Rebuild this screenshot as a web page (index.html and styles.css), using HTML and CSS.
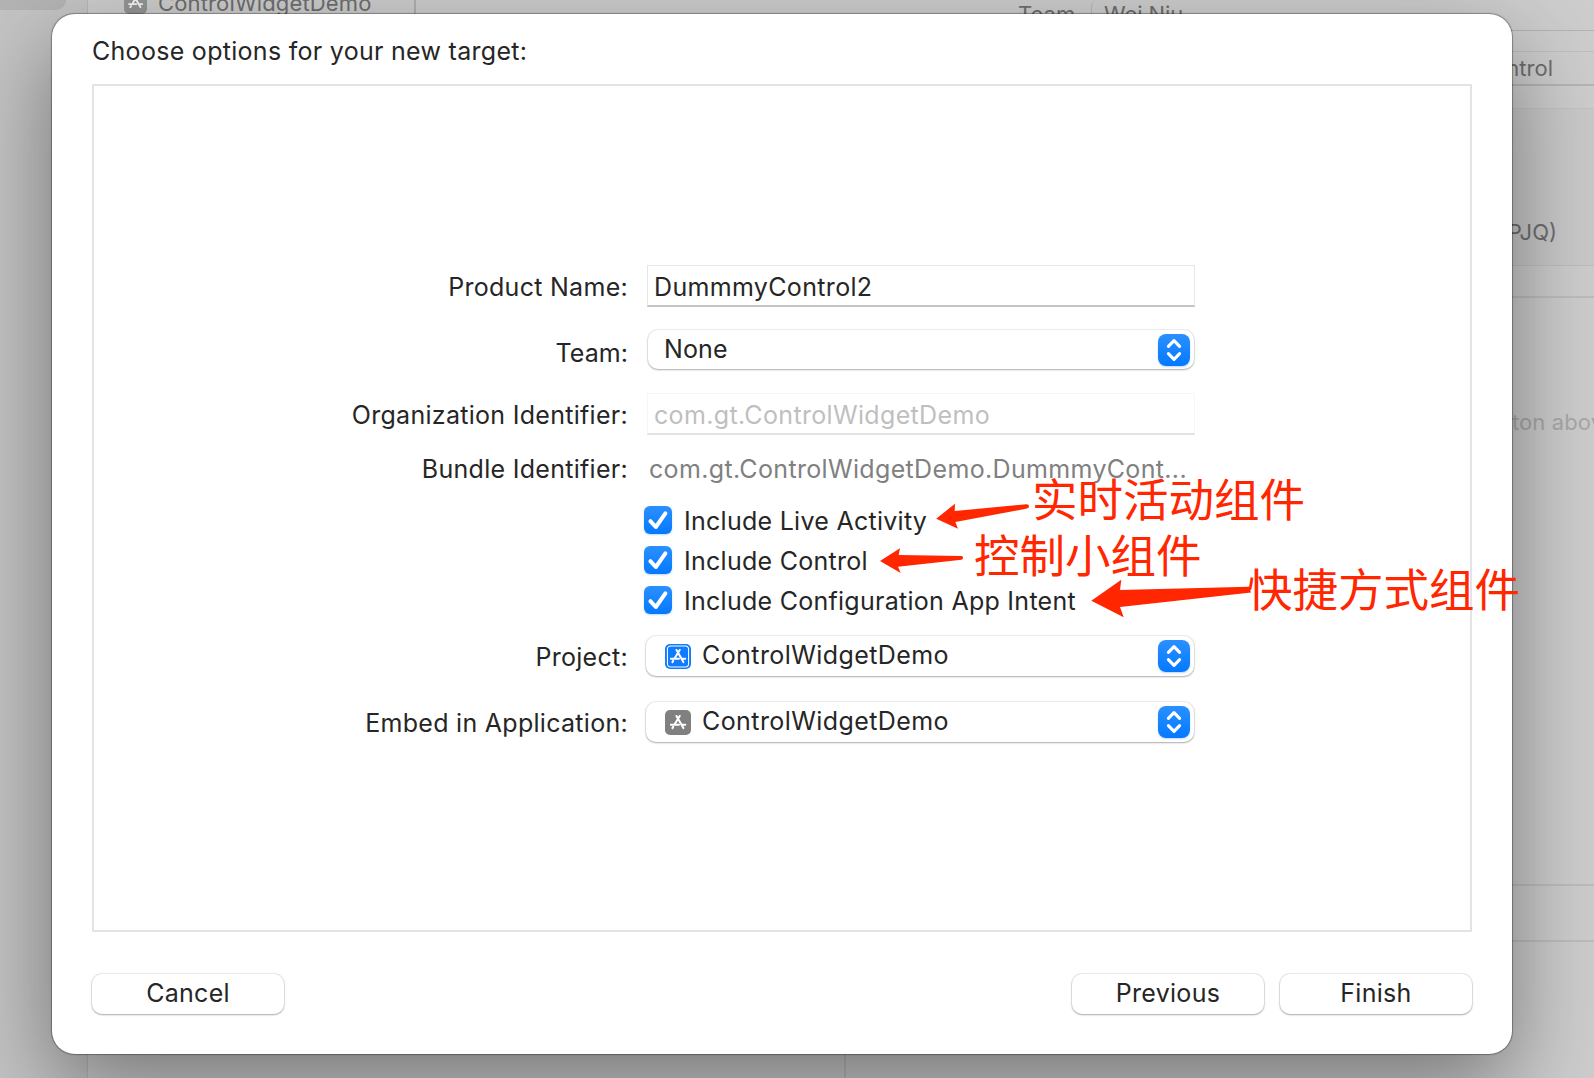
FILE: index.html
```html
<!DOCTYPE html>
<html lang="en">
<head>
<meta charset="utf-8">
<title>New Target</title>
<link rel="stylesheet" href="styles.css">
</head>
<body>
<svg class="defs" width="0" height="0">
  <symbol id="tick" viewBox="0 0 28 28"><path d="M6.4 15.2 11.8 21 21.4 7.4" fill="none" stroke="#fff" stroke-width="4" stroke-linecap="round" stroke-linejoin="round"/></symbol>
  <symbol id="updown" viewBox="0 0 32 32"><path d="M10.4 12.4 16 6.6 21.6 12.4M10.4 19.6 16 25.4 21.6 19.6" fill="none" stroke="#fff" stroke-width="3.1" stroke-linecap="round" stroke-linejoin="round"/></symbol>
  <symbol id="app" viewBox="0 0 26 26"><path d="M11.4 6.2 18.6 18.8M14.8 6.2 9.2 15.4M5.6 15.4H14M17.6 15.4H20.6M7.2 18.8 8 17.6" fill="none" stroke="#fff" stroke-width="2.1" stroke-linecap="round"/></symbol>
</svg>
<div class="screen">
  <div class="editor">
    <aside class="navigator"><div class="selection"></div></aside>
    <section class="targets">
      <svg class="app-icon faded"><use href="#app"/></svg><span class="target-name">ControlWidgetDemo</span>
    </section>
    <main class="settings">
      <div class="team-line"><span class="team-key">Team</span><span class="team-value">Wei Niu</span></div>
      <div class="gap-line"></div>
      <div class="row-name"><span>ntrol</span></div>
      <div class="gap-band"></div>
      <div class="row-cert"><span>PJQ)</span></div>
      <div class="foot-line"></div>
      <div class="empty"><span>ton above</span></div>
      <div class="section-line"></div>
      <div class="bottom"><div class="split"></div></div>
    </main>
  </div>

  <div class="dialog">
    <h1 class="title">Choose options for your new target:</h1>
    <div class="panel">
      <div class="row product"><label class="label l-product">Product Name:</label><div class="field"><span>DummmyControl2</span></div></div>
      <div class="row team"><label class="label l-team">Team:</label><div class="select narrow"><span class="value t-none">None</span><svg class="stepper"><use href="#updown"/></svg></div></div>
      <div class="row org"><label class="label l-org">Organization Identifier:</label><div class="field disabled"><span>com.gt.ControlWidgetDemo</span></div></div>
      <div class="row bundle"><label class="label">Bundle Identifier:</label><span class="bundle-value">com.gt.ControlWidgetDemo.DummmyCont...</span></div>
      <div class="checks">
        <div class="check"><svg class="box"><use href="#tick"/></svg><span class="t-check">Include Live Activity</span></div>
        <div class="check"><svg class="box"><use href="#tick"/></svg><span class="t-check">Include Control</span></div>
        <div class="check"><svg class="box"><use href="#tick"/></svg><span class="t-check">Include Configuration App Intent</span></div>
      </div>
      <div class="row project"><label class="label l-project">Project:</label><div class="select"><svg class="app-icon blue" viewBox="0 0 26 26"><rect x="2" y="2" width="22" height="22" rx="3.4" fill="none" stroke="#fff" stroke-width="1.1"/><use href="#app"/></svg><span class="value">ControlWidgetDemo</span><svg class="stepper"><use href="#updown"/></svg></div></div>
      <div class="row embed"><label class="label l-embed">Embed in Application:</label><div class="select"><svg class="app-icon"><use href="#app"/></svg><span class="value">ControlWidgetDemo</span><svg class="stepper"><use href="#updown"/></svg></div></div>
    </div>
    <div class="buttons">
      <button class="button">Cancel</button><span class="spring"></span><button class="button">Previous</button><button class="button">Finish</button>
    </div>
  </div>

  <svg class="arrows" viewBox="0 0 1594 1078">
    <path d="M936.2 518.7 955 503.7 954.7 511 1026.5 504.3Q1029 504.3 1029 506.2T1027 508.6L955.3 522 958 528.7Z"/>
    <path d="M880 561 900 548.3 898.7 555 961.5 556Q963 556 963 557.7T961.5 559.8L898 566.7 900.7 573Z"/>
    <path d="M1091.3 600.7 1121.3 579.7 1120 590 1249 586.8 1251 592.6 1120 607 1123.7 617.3Z"/>
  </svg>
  <span class="note n1">实时活动组件</span>
  <span class="note n2">控制小组件</span>
  <span class="note n3">快捷方式组件</span>
</div>
</body>
</html>
```
FILE: styles.css
```css
* { box-sizing: border-box; }
body { margin: 0; font-family: Inter, "Liberation Sans", sans-serif; font-size: 25px; font-weight: 440; line-height: 30px; letter-spacing: .29px; color: #262626; }
span, label, h1 { white-space: nowrap; }
.defs { position: absolute; }
.screen { display: flow-root; position: relative; width: 1594px; height: 1078px; overflow: hidden; background: #cdcdcd; }

/* dimmed editor window behind the sheet */
.editor { position: absolute; inset: 0; display: flex; font-size: 22px; line-height: 26px; letter-spacing: 0; color: #6e6e6e; }
.navigator { flex: none; width: 88px; background: #c4c4c4; border-right: 1px solid #b6b6b6; }
.selection { width: 66px; height: 10px; background: #b4b4b4; border-radius: 0 0 10px 0; }
.targets { flex: none; width: 328px; height: 30px; border-right: 2px solid #b0b0b0; display: flex; }
.target-name { margin: -10px 0 0 11px; letter-spacing: .15px; }
.faded.app-icon { width: 23px; height: 24px; margin: -10px 0 0 36px; background: #8c8c8c; opacity: .85; }
.settings { flex: 1; min-width: 0; display: flex; flex-direction: column; }
.team-line { height: 31px; border-bottom: 1px solid #b2b2b2; display: flex; }
.team-key { margin: 1px 0 0 602px; width: 73px; }
.team-value { border-left: 1px solid #b8b8b8; border-radius: 6px 0 0 0; padding: 1px 0 0 12px; letter-spacing: -.1px; }
.gap-line { height: 21px; border-bottom: 1px solid #bfbfbf; }
.row-name { height: 34px; border-bottom: 2px solid #b4b4b4; display: flex; justify-content: flex-end; padding: 3px 41px 0 0; }
.gap-band { height: 23px; border-bottom: 1px solid #c2c2c2; }
.row-cert { height: 157px; border-bottom: 1px solid #bebebe; background: #c9c9c9; display: flex; justify-content: flex-end; padding: 110px 37px 0 0; }
.foot-line { height: 32px; border-bottom: 2px solid #bdbdbd; }
.empty { height: 588px; border-bottom: 2px solid #bdbdbd; padding: 111px 0 0 1096px; color: #a8a8a8; letter-spacing: .1px; }
.section-line { height: 56px; border-bottom: 2px solid #bdbdbd; }
.bottom { flex: 1; }
.split { width: 430px; height: 136px; border-right: 2px solid #bdbdbd; }

/* sheet */
.dialog { position: relative; width: 1460px; height: 1040px; margin: 14px 0 0 52px; background: #fff; border-radius: 23px; padding: 22px 40px 0; box-shadow: 0 0 1px 1px rgba(0,0,0,.32), 0 34px 90px rgba(0,0,0,.42); }
.title { margin: 0; height: 48px; font-size: inherit; font-weight: inherit; }
.panel { height: 848px; border: 2px solid #e4e4e4; padding-top: 179px; }
.row { display: flex; align-items: flex-start; }
.label { width: 534px; margin-right: 18px; text-align: right; }
.product { height: 65px; }
.team { height: 63px; }
.org { height: 61px; }
.bundle { height: 52px; }
.l-product { padding-top: 7px; }
.l-team { padding-top: 8px; letter-spacing: .05px; }
.l-org { padding-top: 7px; }
.l-project, .l-embed { padding-top: 6px; }
.field { width: 548px; height: 42px; margin-left: 1px; padding: 6px 6px; border: 1px solid #e6e6e6; border-bottom: 2px solid #c4c4c4; }
.disabled { border-color: #f6f6f6; border-bottom-color: #e2e2e2; color: #bfbfbf; }
.select { display: flex; align-items: center; width: 548px; height: 40px; padding: 0 4px 0 19px; border-radius: 10px; background: #fff; box-shadow: 0 0 1px 1px rgba(0,0,0,.07), 0 1px 2px rgba(0,0,0,.28); }
.narrow { width: 546px; height: 39px; margin-left: 2px; padding-left: 16px; }
.value { flex: 1; position: relative; top: -1px; letter-spacing: .42px; }
.t-none { letter-spacing: .1px; }
.stepper { width: 32px; height: 32px; border-radius: 8px; background: linear-gradient(#2b90ff, #0479ff); box-shadow: 0 1px 2px rgba(0,90,220,.25); }
.field, .bundle-value { letter-spacing: .34px; }
.bundle-value { margin-left: 3px; color: #808080; }
.checks { padding-left: 550px; height: 130px; }
.check { display: flex; align-items: center; height: 28px; margin-bottom: 12px; gap: 12px; }
.t-check { letter-spacing: .27px; padding-top: 2px; }
.box { width: 28px; height: 28px; border-radius: 6px; background: linear-gradient(#2b90ff, #0479ff); box-shadow: 0 1px 2px rgba(0,90,220,.25); }
.app-icon { flex: none; width: 26px; height: 25px; margin-right: 11px; border-radius: 5px; background: #808080; }
.select .app-icon { margin-top: 1px; }
.blue { background: #0f7bff; }
.project { height: 66px; }
.buttons { display: flex; gap: 16px; padding-top: 42px; }
.spring { flex: 1; }
.button { width: 192px; height: 40px; border: 0; border-radius: 10px; background: #fff; padding: 0 0 3px; font: inherit; letter-spacing: inherit; color: inherit; box-shadow: 0 0 1px 1px rgba(0,0,0,.08), 0 1px 2px rgba(0,0,0,.28); }

/* red annotations over the sheet */
.arrows { position: absolute; inset: 0; width: 1594px; height: 1078px; fill: #ff2600; }
.note { position: absolute; font-family: "Noto Sans CJK SC", sans-serif; font-size: 45.5px; font-weight: 400; line-height: 60px; letter-spacing: 0; color: #ff2600; }
.n1 { left: 1032px; top: 467px; }
.n2 { left: 974px; top: 523px; }
.n3 { left: 1247px; top: 557px; }
```
